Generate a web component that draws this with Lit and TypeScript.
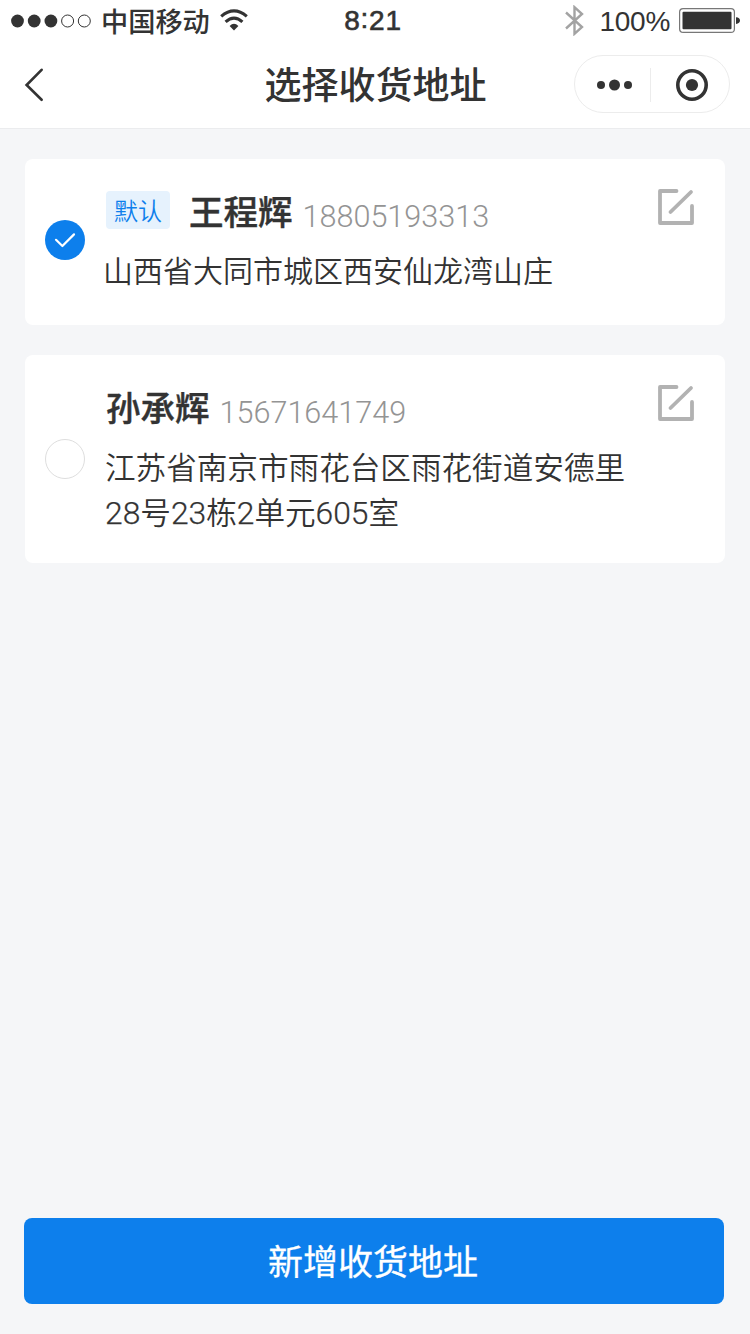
import { LitElement, html, css, svg } from "lit";
import { customElement, property, state } from "lit/decorators.js";
import { classMap } from "lit/directives/class-map.js";

interface Address {
  name: string;
  phone: string;
  lines: string[];
  isDefault: boolean;
}

const ADDRESSES: Address[] = [
  {
    name: "王程辉",
    phone: "18805193313",
    lines: ["山西省大同市城区西安仙龙湾山庄"],
    isDefault: true,
  },
  {
    name: "孙承辉",
    phone: "15671641749",
    lines: ["江苏省南京市雨花台区雨花街道安德里", "28号23栋2单元605室"],
    isDefault: false,
  },
];

@customElement("status-bar")
class StatusBar extends LitElement {
  static styles = css`
    :host {
      display: flex;
      align-items: center;
      height: 40px;
      color: #333;
      font-family: "Liberation Sans", "Noto Sans CJK SC", sans-serif;
      line-height: 40px;
      white-space: nowrap;
    }
    svg { display: block; flex: none; }
    .side { flex: 1; display: flex; align-items: center; height: 40px; }
    .left { padding-left: 11px; }
    .right { justify-content: flex-end; padding-right: 10px; }
    .signal { margin-top: 1px; }
    .carrier {
      margin: 0 0 1px 9px;
      font-family: "Noto Sans CJK SC", sans-serif;
      font-size: 27.2px;
      font-weight: 500;
    }
    .wifi { margin: 0 0 1px 10px; }
    .time {
      font-size: 28px;
      letter-spacing: 0.8px;
      -webkit-text-stroke: 0.6px #333;
      margin: 2px 0 0 -5px;
    }
    .colon { vertical-align: 2px; line-height: 1; }
    .percent { font-size: 28px; margin: 3px 9px 0 16px; letter-spacing: -0.3px; }
    .battery { margin-top: 1px; }
  `;

  render() {
    return html`
      <div class="side left">
        <svg class="signal" width="81" height="14" viewBox="0 0 81 14">
          ${[0, 1, 2, 3, 4].map((i) =>
            i < 3
              ? svg`<circle cx=${6.5 + i * 16.7} cy="7" r="6.4" fill="#333" />`
              : svg`<circle cx=${6.5 + i * 16.7} cy="7" r="6" fill="none" stroke="#333" stroke-width="1" />`
          )}
        </svg>
        <span class="carrier">中国移动</span>
        <svg class="wifi" width="28" height="22" viewBox="0 0 28 22">
          <g fill="none" stroke="#333" stroke-width="3.1">
            <path d="M1.2 7.4Q14 -3.6 26.8 7.4" />
            <path d="M5.6 12.9Q14 5.3 22.4 12.9" />
          </g>
          <path d="M9.6 17Q14 12.4 18.4 17L14 21.4Z" fill="#333" />
        </svg>
      </div>
      <span class="time">8<span class="colon">:</span>21</span>
      <div class="side right">
        <svg width="19" height="31" viewBox="0 0 19 31">
          <path d="M1 7.5L17 22L9.5 28.8V2.2L17 9L1 23.5" fill="none" stroke="#a3a3a3" stroke-width="2.4" />
        </svg>
        <span class="percent">100%</span>
        <svg class="battery" width="61" height="25" viewBox="0 0 61 25">
          <rect x="0.6" y="0.6" width="54.8" height="23.8" rx="3.5" fill="none" stroke="#777" stroke-width="1.2" />
          <rect x="3.5" y="3.8" width="49" height="17.4" rx="1" fill="#333" />
          <path d="M57 9.2Q61 9.6 61 12.6T57 16Z" fill="#333" />
        </svg>
      </div>
    `;
  }
}

@customElement("nav-bar")
class NavBar extends LitElement {
  @property() heading = "";

  static styles = css`
    :host {
      display: grid;
      grid-template-columns: 175px 1fr 175px;
      align-items: center;
      box-sizing: border-box;
      height: 89px;
      border-bottom: 1px solid #ebecee;
      color: #333;
    }
    svg { display: block; }
    .back { margin: 1px 0 0 24px; }
    .heading {
      margin: 0 0 2px 1px;
      text-align: center;
      font: 500 37px/60px "Noto Sans CJK SC", sans-serif;
      white-space: nowrap;
    }
    .capsule {
      display: flex;
      align-items: center;
      box-sizing: border-box;
      width: 156px;
      height: 58px;
      padding-top: 2px;
      margin: 0 0 1px -1px;
      border: 1px solid #ececec;
      border-radius: 29px;
    }
    .more { margin-left: 21px; }
    .rule { width: 1px; height: 34px; margin: 0 25px 0 18px; background: #ececec; }
  `;

  render() {
    return html`
      <svg class="back" width="20" height="34" viewBox="0 0 20 34">
        <path d="M17.6 1.8L2.6 17L17.6 31.8" fill="none" stroke="#333" stroke-width="2.6" stroke-linecap="round" />
      </svg>
      <h1 class="heading">${this.heading}</h1>
      <div class="capsule">
        <svg class="more" width="36" height="12" viewBox="0 0 36 12">
          <g fill="#333">
            <circle cx="5" cy="6" r="4" />
            <circle cx="18.5" cy="6" r="5.5" />
            <circle cx="32" cy="6" r="4" />
          </g>
        </svg>
        <span class="rule"></span>
        <svg width="32" height="32" viewBox="0 0 32 32">
          <circle cx="16" cy="16" r="14.2" fill="none" stroke="#333" stroke-width="3.6" />
          <circle cx="16" cy="16" r="6.1" fill="#333" />
        </svg>
      </div>
    `;
  }
}

@customElement("address-card")
class AddressCard extends LitElement {
  @property({ attribute: false }) address!: Address;
  @property({ type: Boolean }) selected = false;

  static styles = css`
    :host {
      display: grid;
      grid-template-columns: 40px 1fr 36px;
      column-gap: 21px;
      box-sizing: border-box;
      padding: 30px 31px 29px 20px;
      background: #fff;
      border-radius: 8px;
      color: #333;
      font-family: "Noto Sans CJK SC", sans-serif;
    }
    svg { display: block; }
    .radio {
      align-self: center;
      box-sizing: border-box;
      width: 40px;
      height: 40px;
      margin-bottom: 1px;
      border: 1px solid #dedede;
      border-radius: 50%;
    }
    .radio.on { border: 0; background: #0d7fec; margin-bottom: 5px; }
    .who { display: flex; height: 46px; white-space: nowrap; }
    .tag {
      width: 64px;
      height: 38px;
      margin: 2px 19px 0 0;
      border-radius: 4px;
      background: #e6f2fd;
      color: #0d7fec;
      text-align: center;
      font-size: 24px;
      font-weight: 350;
      line-height: 37px;
    }
    .name {
      font-size: 34.5px;
      font-weight: 500;
      line-height: 42px;
      -webkit-text-stroke: 0.4px #333;
    }
    .phone {
      margin-left: 10px;
      color: #949494;
      font: 300 30.6px/55px Roboto, "Liberation Sans", sans-serif;
    }
    .address {
      margin: 13px 0 0 -1px;
      font-size: 30.6px;
      font-weight: 350;
      line-height: 45px;
      white-space: nowrap;
    }
    .address.short { margin: 12px 0 4px -3px; font-size: 30px; }
    .num {
      font-family: Roboto, "Liberation Sans", sans-serif;
      font-size: 31.8px;
      font-weight: 300;
      line-height: 1;
      -webkit-text-stroke: 0.25px #333;
    }
  `;

  private withNumerals(line: string) {
    return line
      .split(/(\d+)/)
      .filter(Boolean)
      .map((part) => (/\d/.test(part) ? html`<span class="num">${part}</span>` : part));
  }

  render() {
    const { name, phone, lines, isDefault } = this.address;
    return html`
      <div class=${classMap({ radio: true, on: this.selected })}>
        ${this.selected
          ? html`<svg width="40" height="40" viewBox="0 0 40 40">
              <path d="M11 19.8L17.4 26L29 14.4" fill="none" stroke="#fff" stroke-width="2.2" stroke-linecap="round" stroke-linejoin="round" />
            </svg>`
          : null}
      </div>
      <div>
        <div class="who">
          ${isDefault ? html`<span class="tag">默认</span>` : null}
          <span class="name">${name}</span>
          <span class="phone">${phone}</span>
        </div>
        <div class=${classMap({ address: true, short: lines.length === 1 })}>
          ${lines.map((line) => html`<div>${this.withNumerals(line)}</div>`)}
        </div>
      </div>
      <svg width="36" height="36" viewBox="0 0 36 36">
        <path d="M18.5 2H2V34H34V17M12.5 23L33 3" fill="none" stroke="#b2b2b2" stroke-width="3.8" stroke-linecap="round" stroke-linejoin="round" />
      </svg>
    `;
  }
}

@customElement("app-root")
class AppRoot extends LitElement {
  @state() private selected = 0;

  static styles = css`
    :host {
      display: flex;
      flex-direction: column;
      box-sizing: border-box;
      width: 750px;
      height: 1334px;
      background: #f5f6f8;
    }
    .top { background: #fff; }
    .list {
      flex: 1;
      display: flex;
      flex-direction: column;
      gap: 30px;
      padding: 30px 25px;
    }
    .add {
      height: 86px;
      margin: 0 26px 30px 24px;
      padding: 0 2px 2px 0;
      border: 0;
      border-radius: 8px;
      background: #0d7fec;
      color: #fff;
      font: 400 35px/84px "Noto Sans CJK SC", sans-serif;
      -webkit-text-stroke: 0.3px #fff;
    }
  `;

  render() {
    return html`
      <header class="top">
        <status-bar></status-bar>
        <nav-bar heading="选择收货地址"></nav-bar>
      </header>
      <main class="list">
        ${ADDRESSES.map(
          (address, i) => html`<address-card
            .address=${address}
            ?selected=${i === this.selected}
            @click=${() => (this.selected = i)}
          ></address-card>`
        )}
      </main>
      <button class="add">新增收货地址</button>
    `;
  }
}
